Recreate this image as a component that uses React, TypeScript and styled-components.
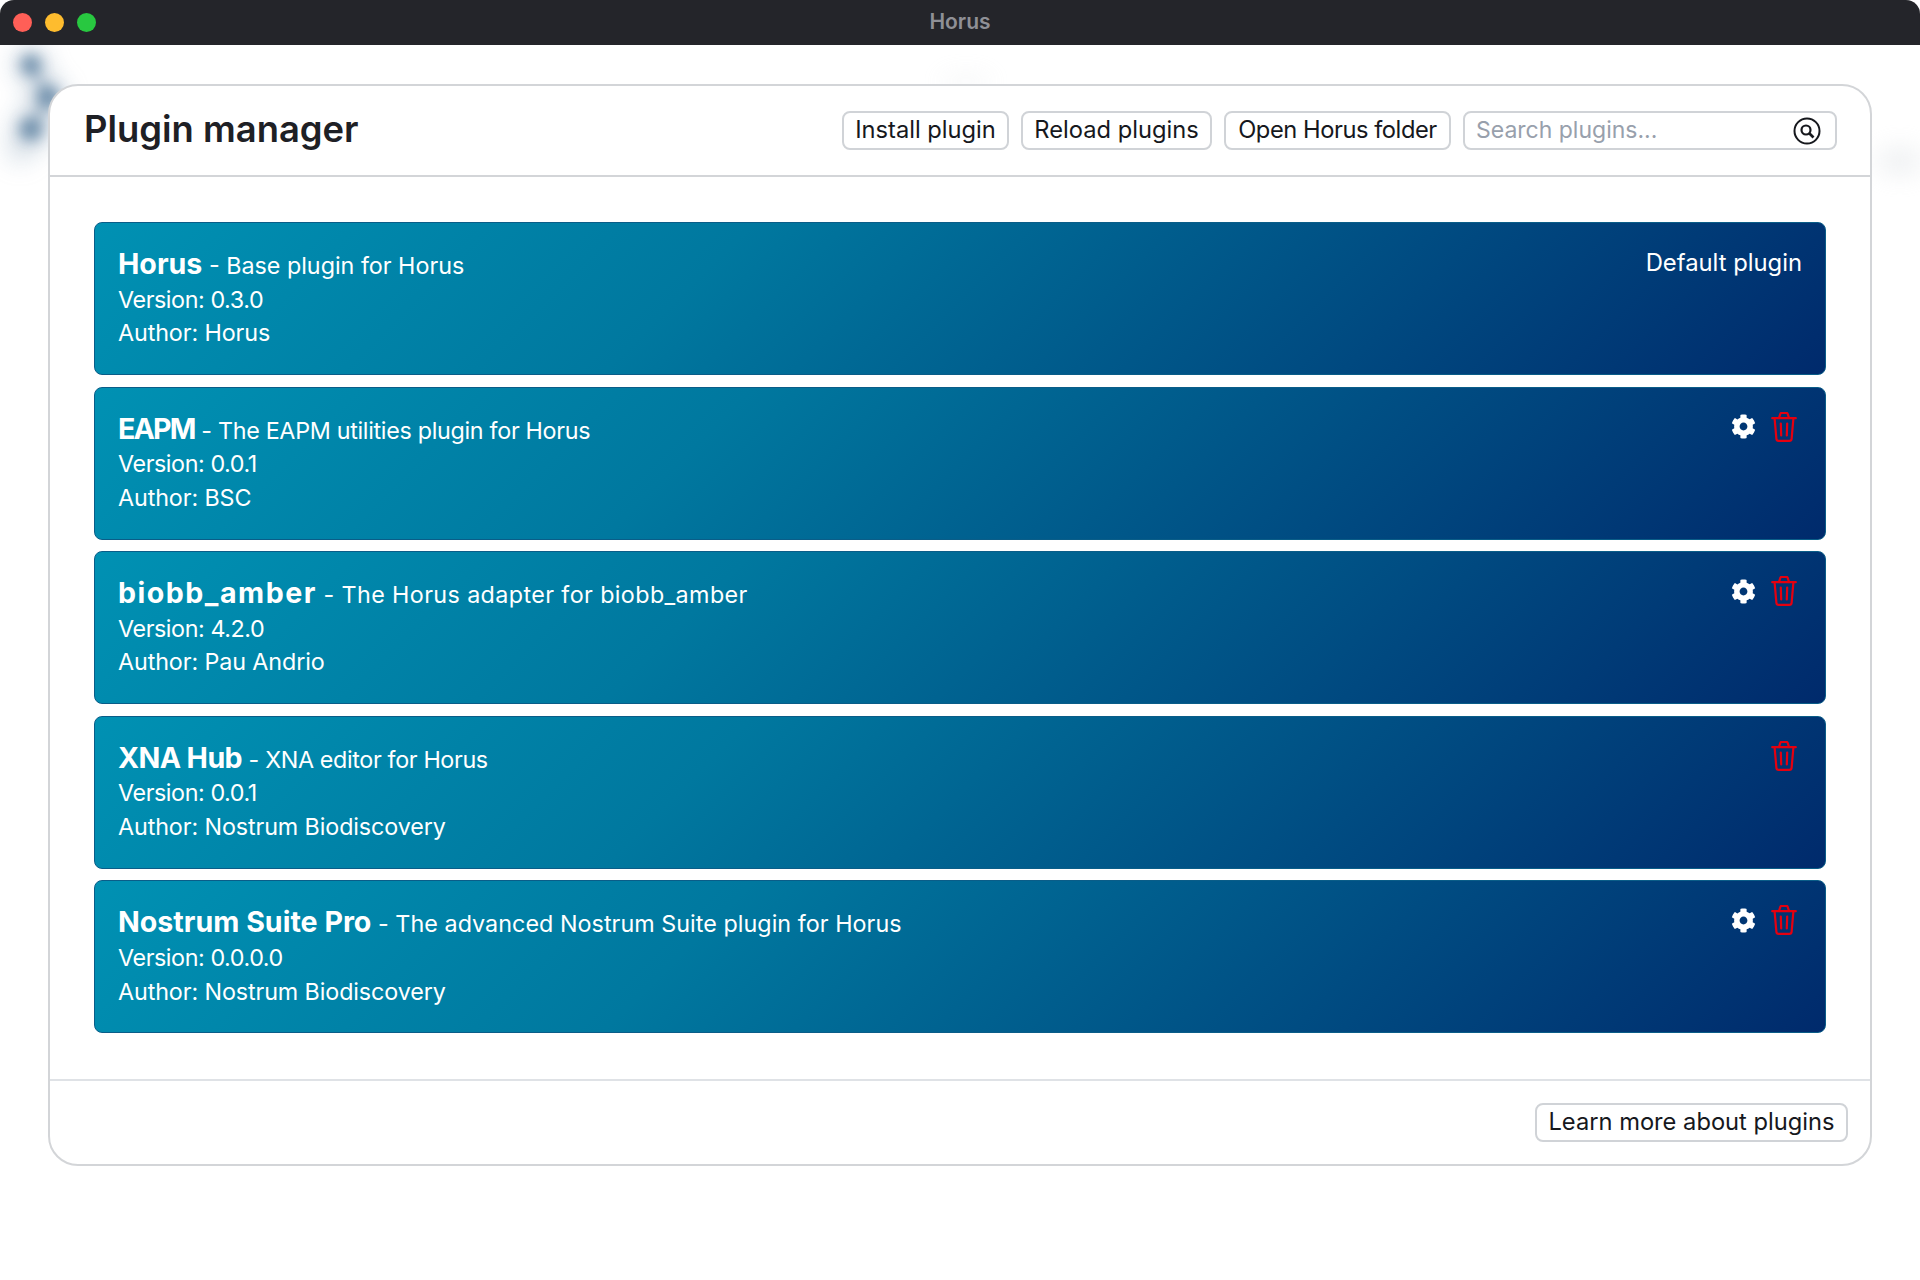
import React from 'react';
import styled, { createGlobalStyle } from 'styled-components';
import { FaCog } from 'react-icons/fa';

const GlobalStyle = createGlobalStyle`
  html, body {
    margin: 0;
    padding: 0;
    background: #fff;
  }
  body {
    font-family: "Inter", "Liberation Sans", sans-serif;
    color: #1e2025;
  }
`;

const Window = styled.div`
  position: relative;
  width: 1920px;
  height: 1280px;
  background: #fff;
  overflow: hidden;
  display: flex;
  flex-direction: column;
`;

const TitleBar = styled.header`
  height: 45px;
  flex: none;
  box-sizing: border-box;
  padding-bottom: 2px;
  display: flex;
  align-items: center;
  justify-content: center;
  position: relative;
  background: #24252a;
  border-radius: 14px 14px 0 0;
  color: #8f9096;
  font-size: 21px;
  font-weight: 600;
`;

const Lights = styled.div`
  position: absolute;
  left: 13px;
  top: 13px;
  display: flex;
  gap: 13px;
`;

const Light = styled.span<{ $color: string }>`
  width: 19px;
  height: 19px;
  border-radius: 50%;
  background: ${(p) => p.$color};
`;

const Smudge = styled.svg`
  position: absolute;
  left: 0;
  top: 45px;
  pointer-events: none;
`;

const Page = styled.main`
  flex: 1;
  position: relative;
  padding: 39px 48px 114px 48px;
  display: flex;
`;

const Manager = styled.section`
  flex: 1;
  position: relative;
  display: flex;
  flex-direction: column;
  background: #fff;
  border: 2px solid #d3d5d8;
  border-radius: 30px;
`;

const Header = styled.div`
  height: 91px;
  flex: none;
  box-sizing: border-box;
  padding: 0 33px 0 34px;
  display: flex;
  align-items: center;
  justify-content: space-between;
  border-bottom: 2px solid #d3d5d8;
`;

const Title = styled.h1`
  margin: -3px 0 0;
  font-size: 36.4px;
  font-weight: 600;
  color: #1e2025;
`;

const Actions = styled.div`
  display: flex;
  gap: 12px;
`;

const Button = styled.button<{ $width: number; $tracking?: number }>`
  width: ${(p) => p.$width}px;
  height: 39px;
  box-sizing: border-box;
  padding: 0 0 2px;
  background: #fff;
  border: 2px solid #d0d3d7;
  border-radius: 8px;
  font-family: inherit;
  font-size: 23.7px;
  letter-spacing: ${(p) => p.$tracking ?? 0}px;
  color: #16181d;
  white-space: nowrap;
`;

const Search = styled.div`
  width: 374px;
  height: 39px;
  box-sizing: border-box;
  padding: 0 14px 2px 11px;
  display: flex;
  align-items: center;
  justify-content: space-between;
  border: 2px solid #d0d3d7;
  border-radius: 8px;
  font-size: 23px;
  color: #98a0ac;

  svg {
    margin-bottom: -2px;
  }
`;

const List = styled.div`
  flex: 1;
  padding: 45px 44px 0;
  display: flex;
  flex-direction: column;
  gap: 11.6px;
`;

const Plugin = styled.article`
  height: 153px;
  box-sizing: border-box;
  padding: 24px 23px 0;
  display: flex;
  justify-content: space-between;
  align-items: flex-start;
  border: 1px solid #0a5d88;
  border-radius: 8px;
  color: #fff;
  background: linear-gradient(135deg, #0091b3 0%, #00789f 35%, #005a8b 60%, #002a6c 100%);
`;

const Info = styled.div`
  font-size: 23.3px;
  line-height: 33.6px;
`;

const NameRow = styled.div`
  white-space: nowrap;
`;

const Name = styled.strong<{ $tracking?: number }>`
  font-size: 28.6px;
  font-weight: 700;
  letter-spacing: ${(p) => p.$tracking ?? 0}px;
`;

const Description = styled.span<{ $tracking?: number }>`
  letter-spacing: ${(p) => p.$tracking ?? 0}px;
`;

const Version = styled.div`
  letter-spacing: -0.42px;
`;

const Author = styled.div`
  letter-spacing: -0.1px;
`;

const Tools = styled.div`
  display: flex;
  align-items: center;
  gap: 15px;
  height: 36px;
  margin: -3px 5px 0 0;
`;

const Note = styled.span`
  font-size: 23.8px;
  line-height: 33.6px;
  margin-top: -1px;
`;

const Footer = styled.div`
  height: 85px;
  flex: none;
  box-sizing: border-box;
  padding: 22px 22px 0 0;
  display: flex;
  justify-content: flex-end;
  border-top: 2px solid #dfe2e6;
`;

function TrashIcon() {
  return (
    <svg width="26" height="30" viewBox="0 0 26 30" fill="none" stroke="#e5000f" strokeWidth="2.2" strokeLinejoin="round" strokeLinecap="round">
      <path d="M1.2 6.2h23.6" />
      <path d="M8 6l1.4-4.4a1 1 0 0 1 1-.6h5.2a1 1 0 0 1 1 .6L18 6" />
      <path d="M3.6 6.5l1.8 20.3a2.2 2.2 0 0 0 2.2 2h10.8a2.2 2.2 0 0 0 2.2-2l1.8-20.3" />
      <path d="M9.8 11.5l.4 12M16.2 11.5l-.4 12" />
    </svg>
  );
}

function SearchIcon() {
  return (
    <svg width="28" height="28" viewBox="0 0 28 28" fill="none" stroke="#16181d" strokeWidth="2">
      <circle cx="14" cy="14" r="12.5" />
      <circle cx="13" cy="13" r="4.5" strokeWidth="2.2" />
      <path d="M16.5 16.5l4 4" strokeWidth="2.6" />
    </svg>
  );
}

type PluginData = {
  name: string;
  description: string;
  version: string;
  author: string;
  settings?: boolean;
  removable?: boolean;
  note?: string;
  nameTracking?: number;
  descTracking?: number;
};

const plugins: PluginData[] = [
  { name: 'Horus', description: 'Base plugin for Horus', version: '0.3.0', author: 'Horus', note: 'Default plugin' },
  { name: 'EAPM', description: 'The EAPM utilities plugin for Horus', version: '0.0.1', author: 'BSC', settings: true, removable: true, nameTracking: -1.8, descTracking: -0.3 },
  { name: 'biobb_amber', description: 'The Horus adapter for biobb_amber', version: '4.2.0', author: 'Pau Andrio', settings: true, removable: true, nameTracking: 1.5, descTracking: 0.4 },
  { name: 'XNA Hub', description: 'XNA editor for Horus', version: '0.0.1', author: 'Nostrum Biodiscovery', removable: true, nameTracking: -0.6, descTracking: -0.35 },
  { name: 'Nostrum Suite Pro', description: 'The advanced Nostrum Suite plugin for Horus', version: '0.0.0.0', author: 'Nostrum Biodiscovery', settings: true, removable: true, descTracking: 0.05 },
];

export default function App() {
  return (
    <>
      <GlobalStyle />
      <Window>
        <TitleBar>
          <Lights>
            <Light $color="#ff5f57" />
            <Light $color="#febc2e" />
            <Light $color="#28c840" />
          </Lights>
          Horus
        </TitleBar>
        <Smudge width="1920" height="200" viewBox="0 0 1920 200">
          <defs>
            <filter id="wide" x="-200%" y="-200%" width="500%" height="500%">
              <feGaussianBlur stdDeviation="12" />
            </filter>
            <filter id="soft" x="-100%" y="-100%" width="300%" height="300%">
              <feGaussianBlur stdDeviation="7" />
            </filter>
          </defs>
          <g filter="url(#wide)" fill="#8ea6bb" opacity="0.55">
            <circle cx="31" cy="20" r="16" />
            <circle cx="47" cy="52" r="18" />
            <circle cx="31" cy="84" r="18" />
            <circle cx="20" cy="105" r="14" opacity="0.5" />
          </g>
          <g filter="url(#soft)" fill="#5f83a3" opacity="0.85">
            <circle cx="31" cy="20" r="10" />
            <circle cx="48" cy="52" r="11" />
            <circle cx="31" cy="84" r="11" />
            <path d="M31 20L48 52L31 84" stroke="#5f83a3" strokeWidth="6" fill="none" opacity="0.5" />
          </g>
          <g filter="url(#wide)" fill="#d8dce0" opacity="0.4">
            <ellipse cx="966" cy="36" rx="28" ry="4" />
            <ellipse cx="1900" cy="116" rx="24" ry="14" />
          </g>
        </Smudge>
        <Page>
          <Manager>
            <Header>
              <Title>Plugin manager</Title>
              <Actions>
                <Button $width={167}>Install plugin</Button>
                <Button $width={191}>Reload plugins</Button>
                <Button $width={227} $tracking={-0.45}>Open Horus folder</Button>
                <Search>
                  Search plugins...
                  <SearchIcon />
                </Search>
              </Actions>
            </Header>
            <List>
              {plugins.map((plugin) => (
                <Plugin key={plugin.name}>
                  <Info>
                    <NameRow>
                      <Name $tracking={plugin.nameTracking}>{plugin.name}</Name>{' '}
                      <Description $tracking={plugin.descTracking}>- {plugin.description}</Description>
                    </NameRow>
                    <Version>Version: {plugin.version}</Version>
                    <Author>Author: {plugin.author}</Author>
                  </Info>
                  {plugin.note ? (
                    <Note>{plugin.note}</Note>
                  ) : (
                    <Tools>
                      {plugin.settings && <FaCog size={25} color="#fff" />}
                      {plugin.removable && <TrashIcon />}
                    </Tools>
                  )}
                </Plugin>
              ))}
            </List>
            <Footer>
              <Button $width={313}>Learn more about plugins</Button>
            </Footer>
          </Manager>
        </Page>
      </Window>
    </>
  );
}
